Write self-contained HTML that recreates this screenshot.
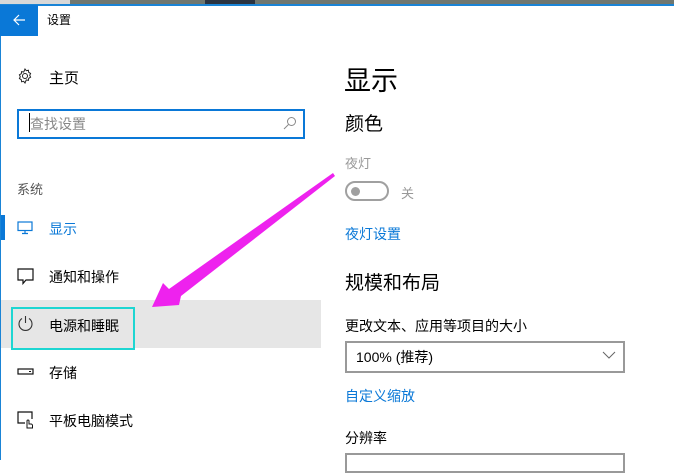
<!DOCTYPE html>
<html><head><meta charset="utf-8"><style>
*{margin:0;padding:0;box-sizing:border-box}
body{width:674px;height:460px;overflow:hidden;background:#fff;position:relative;font-family:"Liberation Sans","Noto Sans CJK SC",sans-serif;color:#000}
.a{position:absolute;white-space:nowrap}
</style></head><body>
<div class="a" style="left:0;top:0;width:674px;height:5px;background:#6f7770"></div>
<div class="a" style="left:0;top:0;width:70px;height:5px;background:#d8d8d8"></div>
<div class="a" style="left:205px;top:0;width:50px;height:5px;background:#2a3340"></div>
<div class="a" style="left:0;top:4px;width:674px;height:2px;background:#1a84d6"></div>
<div class="a" style="left:0;top:5px;width:1px;height:455px;background:#1a84d6"></div>
<div class="a" style="left:0;top:5px;width:38px;height:31px;background:#0a78d7"></div>
<svg class="a" style="left:12px;top:13px" width="14" height="14" viewBox="0 0 14 14"><path d="M13 7H2M7 2L2 7l5 5" stroke="#fff" stroke-width="1.2" fill="none"/></svg>
<div class="a" style="left:47px;top:11px;font-size:12px">设置</div>

<svg class="a" style="left:17px;top:68px" width="16" height="16" viewBox="0 0 16 16"><circle cx="8" cy="8" r="2.5" fill="none" stroke="#222" stroke-width="1"/><path d="M8 1l1.3 1.7 2.1-.5.3 2.1 1.9 1.1-.9 1.9.9 1.9-1.9 1.1-.3 2.1-2.1-.5L8 15l-1.3-1.7-2.1.5-.3-2.1-1.9-1.1.9-1.9-.9-1.9 1.9-1.1.3-2.1 2.1.5z" fill="none" stroke="#222" stroke-width="1"/></svg>
<div class="a" style="left:49px;top:67px;font-size:15px">主页</div>

<div class="a" style="left:17px;top:109px;width:288px;height:30px;border:2px solid #0a78d7"></div>
<div class="a" style="left:29px;top:113px;width:1px;height:19px;background:#000"></div>
<div class="a" style="left:30px;top:114px;font-size:14px;color:#888">查找设置</div>
<svg class="a" style="left:283px;top:116px" width="14" height="14" viewBox="0 0 14 14"><circle cx="8.5" cy="5.5" r="4" fill="none" stroke="#888"/><path d="M5.5 8.5L1 13" stroke="#888"/></svg>

<div class="a" style="left:17px;top:179px;font-size:13px;color:#555">系统</div>

<div class="a" style="left:1px;top:215px;width:4px;height:25px;background:#0a78d7"></div>
<svg class="a" style="left:17px;top:221px" width="16" height="14" viewBox="0 0 16 14"><rect x="1" y="1" width="14" height="8.5" fill="none" stroke="#0a78d7" stroke-width="1.2"/><path d="M8 10v2M5 12.5h6" stroke="#0a78d7" stroke-width="1.2"/></svg>
<div class="a" style="left:49px;top:219px;font-size:14px;color:#0a78d7">显示</div>

<svg class="a" style="left:17px;top:268px" width="17" height="17" viewBox="0 0 17 17"><path d="M1 1h15v11H9l-3 3.5V12H1z" fill="none" stroke="#111" stroke-width="1.2"/></svg>
<div class="a" style="left:49px;top:267px;font-size:14px">通知和操作</div>

<div class="a" style="left:1px;top:300px;width:320px;height:48px;background:#e6e6e6"></div>
<div class="a" style="left:11px;top:307px;width:124px;height:43px;border:2px solid #1ed6d2"></div>
<svg class="a" style="left:17px;top:315px" width="17" height="17" viewBox="0 0 17 17"><path d="M5 3.5A6.5 6.5 0 1 0 12 3.5M8.5 1v7" fill="none" stroke="#333" stroke-width="1.1"/></svg>
<div class="a" style="left:49px;top:316px;font-size:14px">电源和睡眠</div>

<svg class="a" style="left:17px;top:367px" width="17" height="10" viewBox="0 0 17 10"><rect x="1" y="2" width="15" height="5" fill="none" stroke="#111" stroke-width="1.2"/><path d="M12 4.5h2" stroke="#111"/></svg>
<div class="a" style="left:49px;top:363px;font-size:14px">存储</div>

<svg class="a" style="left:17px;top:411px" width="17" height="18" viewBox="0 0 17 18"><path d="M8 12H1V1h14v7" fill="none" stroke="#111" stroke-width="1.2"/><path d="M10 16v-6a1 1 0 0 1 2 0v3h2a1.5 1.5 0 0 1 1.5 1.5V17H10z" fill="#fff" stroke="#111"/></svg>
<div class="a" style="left:49px;top:411px;font-size:14px">平板电脑模式</div>

<div class="a" style="left:344px;top:59px;font-size:27px">显示</div>
<div class="a" style="left:345px;top:109px;font-size:19px">颜色</div>
<div class="a" style="left:345px;top:153px;font-size:13px;color:#999">夜灯</div>
<div class="a" style="left:345px;top:181px;width:44px;height:20px;border:2px solid #a0a0a0;border-radius:10px"></div>
<div class="a" style="left:351px;top:187px;width:9px;height:9px;background:#a0a0a0;border-radius:50%"></div>
<div class="a" style="left:401px;top:183px;font-size:13px;color:#999">关</div>
<div class="a" style="left:345px;top:224px;font-size:14px;color:#0a78d7">夜灯设置</div>

<div class="a" style="left:345px;top:268px;font-size:19px">规模和布局</div>
<div class="a" style="left:345px;top:316px;font-size:14px">更改文本、应用等项目的大小</div>
<div class="a" style="left:345px;top:341px;width:280px;height:32px;border:2px solid #999"></div>
<div class="a" style="left:356px;top:347px;font-size:14px">100% (推荐)</div>
<svg class="a" style="left:602px;top:351px" width="14" height="9" viewBox="0 0 14 9"><path d="M1 1l6 6 6-6" fill="none" stroke="#666"/></svg>
<div class="a" style="left:345px;top:386px;font-size:14px;color:#0a78d7">自定义缩放</div>
<div class="a" style="left:345px;top:428px;font-size:14px">分辨率</div>
<div class="a" style="left:345px;top:453px;width:280px;height:20px;border:2px solid #999"></div>

<svg class="a" style="left:0;top:0" width="674" height="460"><polygon points="333,173 335,176 181,296 179,305 152,307 163,283 169,289" fill="#ee22ee"/></svg>
</body></html>
